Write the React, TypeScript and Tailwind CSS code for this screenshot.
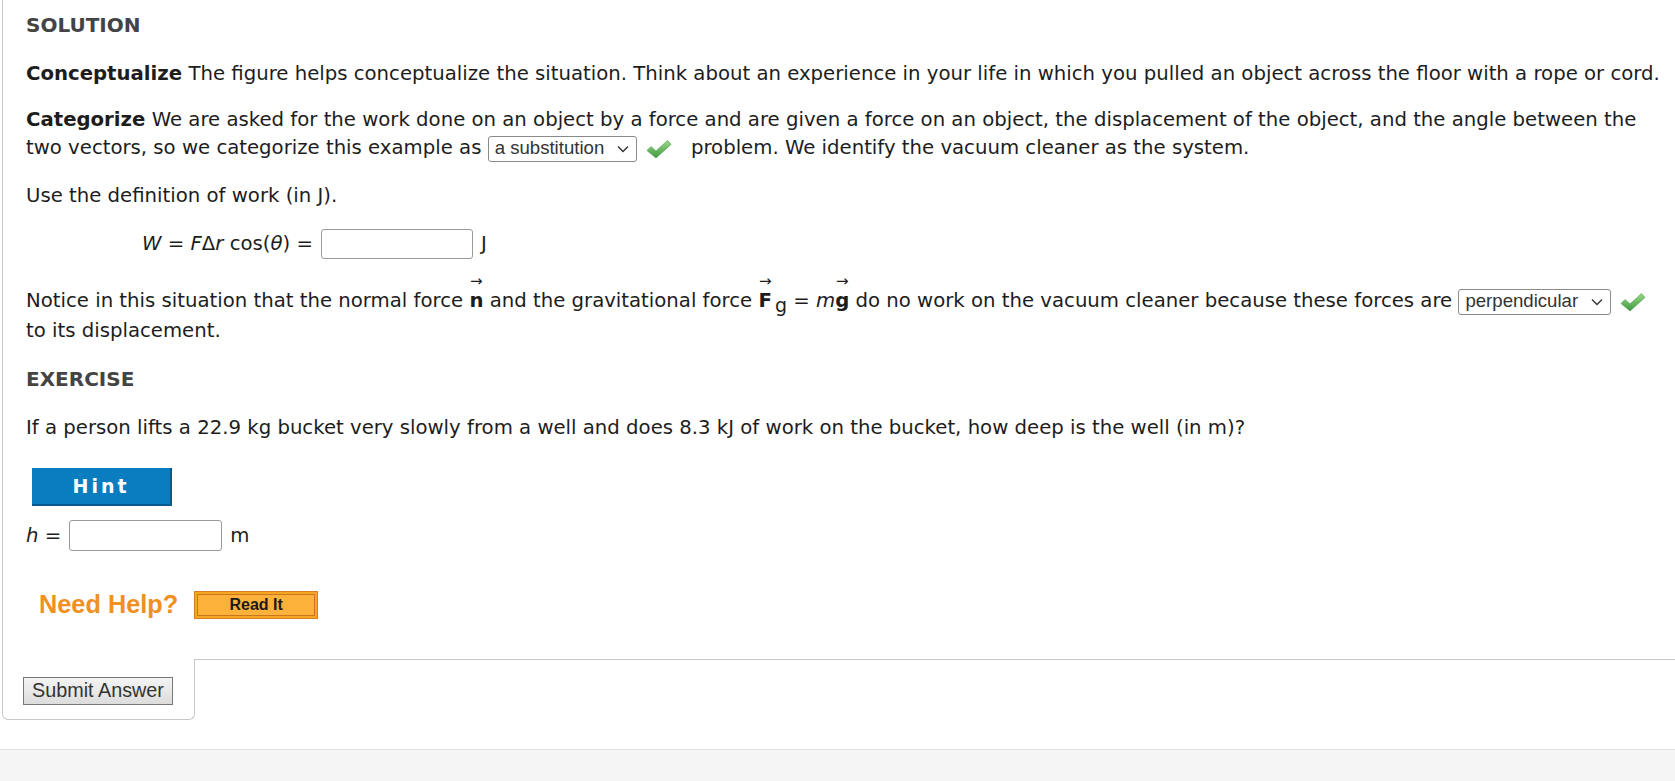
import type { ReactNode } from "react";

const body = "font-['DejaVu_Sans',Verdana,sans-serif]";
const arial = "font-['Liberation_Sans',Arial,sans-serif]";

function Check() {
  return (
    <svg width="28" height="22" viewBox="0 0 28 22" className="inline-block align-middle">
      <defs>
        <linearGradient id="chk" x1="0" y1="0" x2="0" y2="1">
          <stop offset="0" stopColor="#9ad88a" />
          <stop offset="1" stopColor="#3f9a3f" />
        </linearGradient>
      </defs>
      <path d="M2 12.5 L6 8.5 L11 13 L22.5 2.5 L26 6.5 L11 20 Z" fill="url(#chk)" stroke="#4a9a46" strokeWidth="0.6" />
    </svg>
  );
}

function FakeSelect({ label, width }: { label: string; width: string }) {
  return (
    <span
      className={`inline-flex h-[26px] items-center justify-between rounded-[3px] border border-[#8a8a8a] bg-white pl-[6px] pr-[7px] align-middle text-[18.6px] leading-none text-[#333] ${arial} ${width}`}
    >
      <span>{label}</span>
      <svg width="12" height="8" viewBox="0 0 12 8" className="ml-1">
        <path d="M1 1.5 L6 6.5 L11 1.5" fill="none" stroke="#333" strokeWidth="1.4" />
      </svg>
    </span>
  );
}

function Vec({ children }: { children: ReactNode }) {
  return (
    <span className="relative inline-block font-bold">
      {children}
      <span className="absolute -top-[12px] left-1/2 -translate-x-1/2 text-[15px] font-normal leading-none">→</span>
    </span>
  );
}

function Heading({ children }: { children: ReactNode }) {
  return <div className="text-[20px] font-bold leading-[28px] text-[#444]">{children}</div>;
}

export default function App() {
  return (
    <div className={`flex min-h-screen flex-col bg-white text-[19.7px] text-[#1d1d1d] ${body}`}>
      <div className="ml-[2px] border-l border-[#c8c8c8] pb-[40px] pl-[23px] pr-4 pt-[11px]">
        <Heading>SOLUTION</Heading>

        <p className="mt-[21px] whitespace-nowrap leading-[28px]">
          <b>Conceptualize</b> The figure helps conceptualize the situation. Think about an experience in your life in which you pulled an object across the floor with a rope or cord.
        </p>

        <p className="mt-[18px] whitespace-nowrap leading-[28px]">
          <b>Categorize</b> We are asked for the work done on an object by a force and are given a force on an object, the displacement of the object, and the angle between the
          <br />
          two vectors, so we categorize this example as <FakeSelect label="a substitution" width="w-[149px]" />{" "}
          <span className="ml-[2px] mr-[18px]">
            <Check />
          </span>
          problem. We identify the vacuum cleaner as the system.
        </p>

        <p className="mt-[20px] leading-[28px]">Use the definition of work (in J).</p>

        <div className="mt-[19px] flex h-[30px] items-center pl-[116px]">
          <span>
            <i>W</i> = <i>F</i>Δ<i>r</i> cos(<i>θ</i>) =
          </span>
          <span className="ml-[8px] h-[30px] w-[152px] rounded-[3px] border border-[#9a9a9a] bg-white" />
          <span className="ml-[8px]">J</span>
        </div>

        <p className="mt-[27px] whitespace-nowrap leading-[30px]">
          Notice in this situation that the normal force <Vec>n</Vec> and the gravitational force{" "}
          <Vec>F</Vec>
          <sub className="ml-[3px] text-[19px]">g</sub> = <i>m</i>
          <Vec>g</Vec> do no work on the vacuum cleaner because these forces are{" "}
          <FakeSelect label="perpendicular" width="w-[153px]" />
          <span className="ml-[8px]">
            <Check />
          </span>
          <br />
          to its displacement.
        </p>

        <div className="mt-[19px]">
          <Heading>EXERCISE</Heading>
        </div>

        <p className="mt-[21px] leading-[28px]">
          If a person lifts a 22.9 kg bucket very slowly from a well and does 8.3 kJ of work on the bucket, how deep is the well (in m)?
        </p>

        <button
          type="button"
          className={`ml-[6px] mt-[26px] flex h-[38px] w-[140px] items-center justify-center border-b-2 border-r-2 border-[#0b5a8e] bg-[#0a7dc1] text-[19px] font-bold tracking-[3px] text-white ${body}`}
        >
          Hint
        </button>

        <div className="mt-[14px] flex h-[31px] items-center">
          <span>
            <i>h</i> =
          </span>
          <span className="ml-[8px] h-[31px] w-[153px] rounded-[3px] border border-[#9a9a9a] bg-white" />
          <span className="ml-[8px]">m</span>
        </div>

        <div className="mt-[40px] flex h-[28px] items-center pl-[13px]">
          <span className={`text-[25.3px] font-bold text-[#f0901f] ${arial}`}>Need Help?</span>
          <button
            type="button"
            className={`ml-[16px] h-[28px] w-[124px] border border-[#d47f22] bg-[#f7a624] p-[2px] ${arial}`}
          >
            <span className="flex h-full w-full items-center justify-center border border-[#c9761c] bg-[#fbb13a] text-[16px] font-bold text-[#1a1a1a]">
              Read It
            </span>
          </button>
        </div>
      </div>

      <div className="flex">
        <div className="ml-[2px] w-[193px] rounded-b-[6px] border-b border-l border-r border-[#c8c8c8] pb-[13px] pl-[20px] pt-[17px]">
          <button
            type="button"
            className={`h-[28px] w-[150px] border border-[#777] bg-gradient-to-b from-[#f4f4f4] to-[#dcdcdc] text-[19.8px] leading-none text-[#333] ${arial}`}
          >
            Submit Answer
          </button>
        </div>
        <div className="flex-1 border-t border-[#c8c8c8]" />
      </div>

      <div className="h-[29px]" />
      <div className="flex-1 border-t border-[#e3e3e3] bg-[#f5f5f5]" />
    </div>
  );
}
